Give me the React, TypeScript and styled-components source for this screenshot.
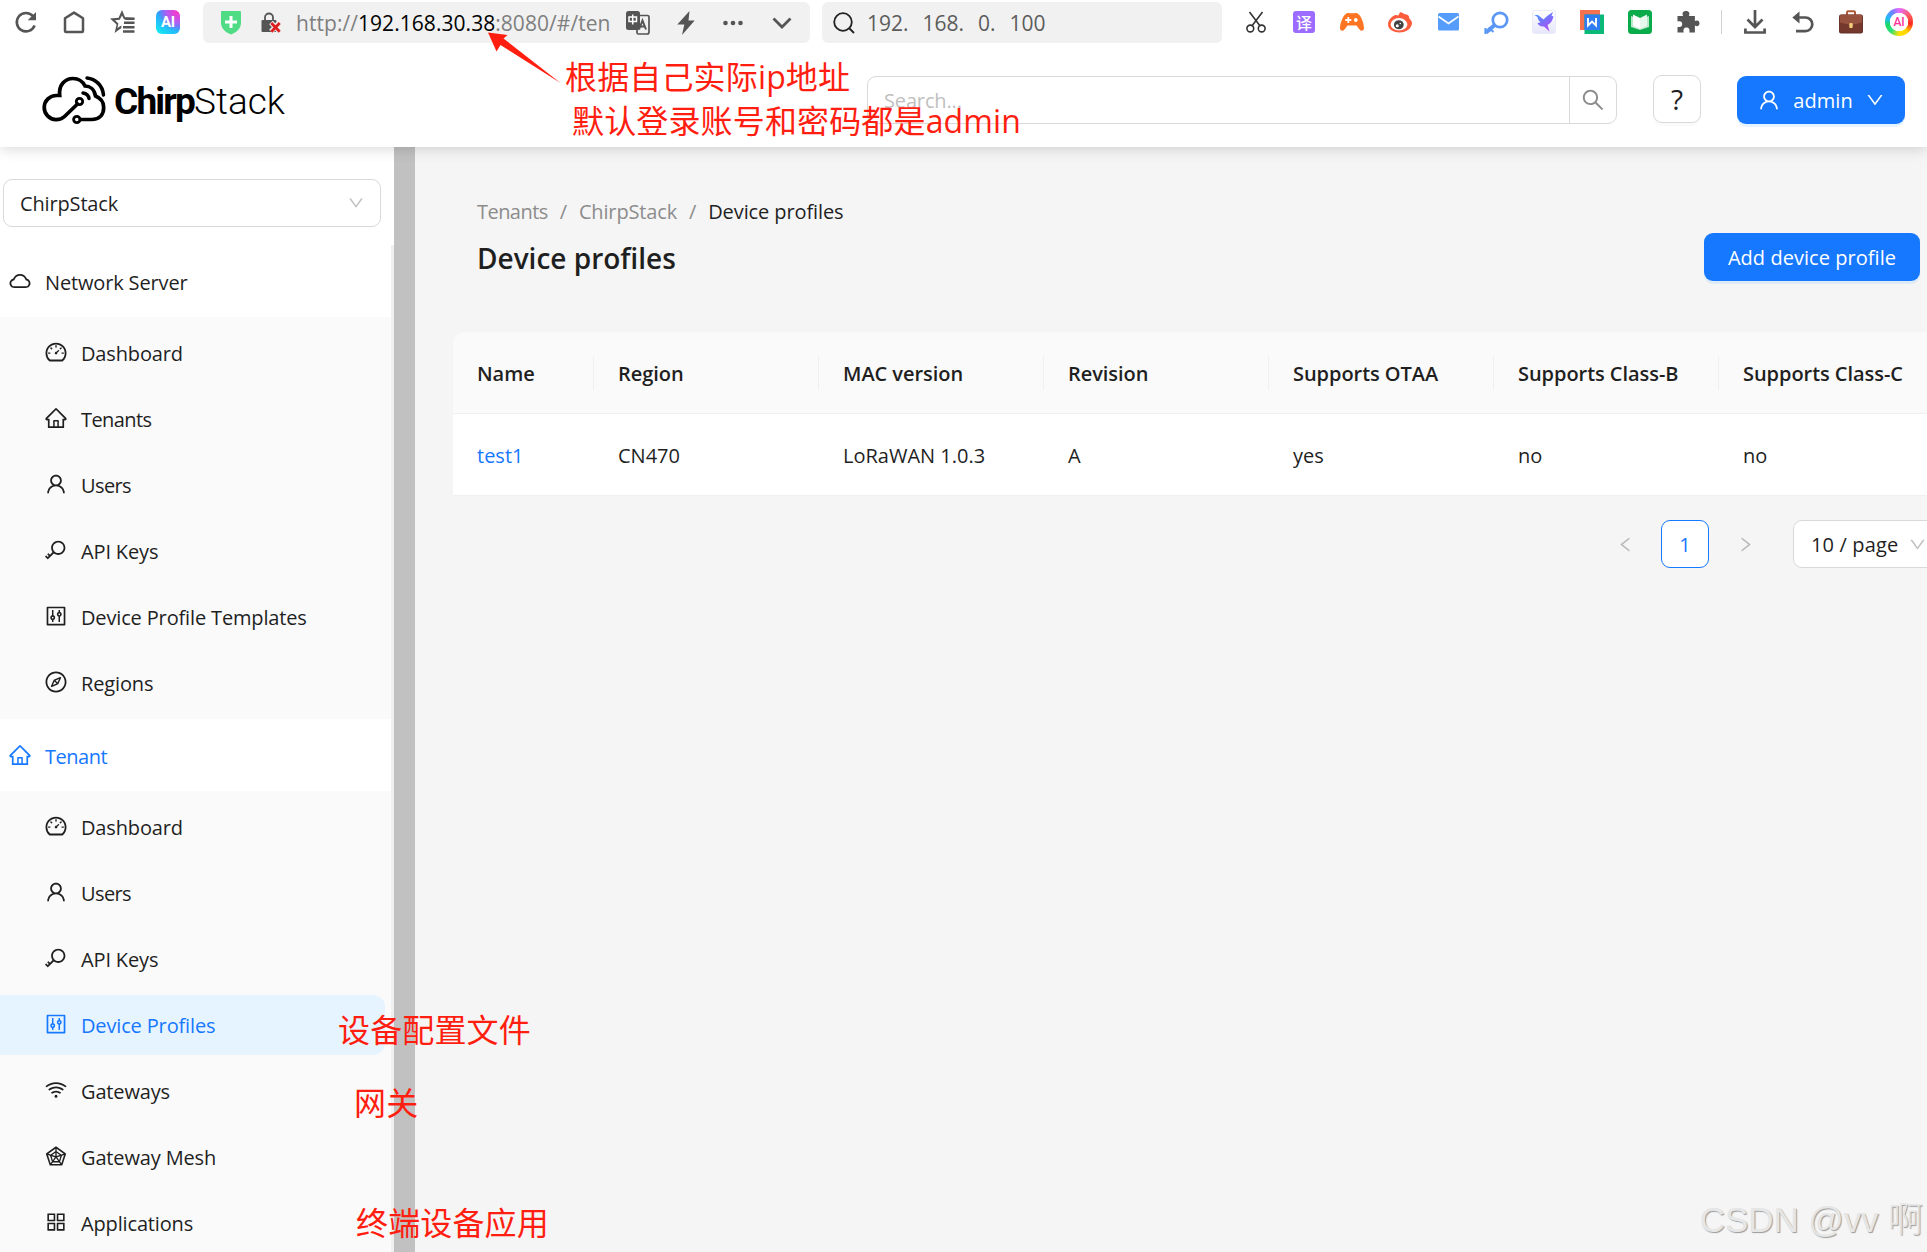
import React from "react";
import styled, { createGlobalStyle, css } from "styled-components";
import {
  AiOutlineCloud,
  AiOutlineDashboard,
  AiOutlineHome,
  AiOutlineUser,
  AiOutlineKey,
  AiOutlineControl,
  AiOutlineCompass,
  AiOutlineWifi,
  AiOutlineRadarChart,
  AiOutlineAppstore,
  AiOutlineSearch,
  AiOutlineDown,
  AiOutlineLeft,
  AiOutlineRight,
} from "react-icons/ai";

const GlobalStyle = createGlobalStyle`
  * { box-sizing: border-box; }
  body {
    margin: 0;
    background: #f5f5f5;
    color: #1f1f1f;
    font-family: "Open Sans", "Noto Sans", "Noto Sans CJK SC", sans-serif;
    font-size: 20px;
    letter-spacing: -0.15px;
    overflow: hidden;
  }
  svg { display: block; flex: none; }
`;

const Page = styled.div`
  position: relative;
  width: 1927px;
  height: 1252px;
  display: flex;
  flex-direction: column;
  overflow: hidden;
`;

/* ---------- browser toolbar ---------- */

const BrowserBar = styled.div`
  position: relative;
  z-index: 3;
  display: flex;
  align-items: flex-start;
  height: 45px;
  background: #fff;
  flex: none;
`;

const Slots = styled.div<{ $width: number; $pad?: number; $shift?: number }>`
  display: flex;
  align-items: center;
  width: ${(p) => p.$width}px;
  height: 44px;
  margin-left: ${(p) => p.$shift ?? 0}px;
  padding-left: ${(p) => p.$pad ?? 0}px;
`;

const Slot = styled.div<{ $w?: number }>`
  width: ${(p) => p.$w ?? 48}px;
  height: 44px;
  flex: none;
  display: flex;
  align-items: center;
  justify-content: center;
`;

const Field = styled.div<{ $width: number }>`
  display: flex;
  align-items: center;
  width: ${(p) => p.$width}px;
  height: 41px;
  margin: 2px 12px 0 0;
  border-radius: 6px;
  background: #f1f1f1;
  flex: none;
`;

const Url = styled.div`
  width: 331px;
  padding-left: 14px;
  color: #7f7f7f;
  white-space: nowrap;
  font-size: 21px;
  letter-spacing: 0.05px;
  flex: none;
  b { color: #000; font-weight: 400; }
`;

const Query = styled.div`
  color: #5c5c5c;
  white-space: pre;
  font-size: 21px;
  letter-spacing: 0;
  word-spacing: 8.5px;
  margin-left: 2px;
`;

const BarDivider = styled.div`
  width: 1px;
  height: 24px;
  margin: 0 9px;
  background: #d0d0d0;
`;

const AiBadge = styled.div`
  width: 24px;
  height: 24px;
  border-radius: 6px;
  display: flex;
  align-items: center;
  justify-content: center;
  color: #fff;
  font: 700 15px/1 Roboto, sans-serif;
  background: radial-gradient(circle at 90% 5%, #ff35c8 0%, #b45cf0 35%, transparent 62%),
    linear-gradient(35deg, #16e4f2 10%, #2f9bff 60%, #5b6cff 100%);
`;

const TranslateTile = styled.div`
  width: 22px;
  height: 22px;
  border-radius: 3px;
  background: #9b6cff;
  color: #fff;
  display: flex;
  align-items: center;
  justify-content: center;
  font: 500 16px/1 "Noto Sans CJK SC", sans-serif;
`;

const AiRing = styled.div`
  width: 28px;
  height: 28px;
  border-radius: 50%;
  display: flex;
  align-items: center;
  justify-content: center;
  background: radial-gradient(circle, #fff 0 9px, transparent 9.5px),
    conic-gradient(#e46bff, #ff5a5a 60deg, #ff2a1a 100deg, #ffd400 140deg, #ffe100 180deg, #2fe07a 220deg, #18d860 255deg, #22b8ff 290deg, #7a7dff 330deg, #e46bff);
  color: #ff2f9a;
  font: 500 12px/1 Roboto, sans-serif;
`;

const G = "#555";

const Reload = () => (
  <svg width="24" height="24" viewBox="0 0 24 24" fill="none" stroke={G} strokeWidth="2.6">
    <path d="M20.6 15.5A9.2 9.2 0 1 1 19 6.2" />
    <path d="M22 2v8.3h-8.3z" fill={G} stroke="none" />
  </svg>
);
const HomeTab = () => (
  <svg width="24" height="24" viewBox="0 0 24 24" fill="none" stroke={G} strokeWidth="2.5" strokeLinejoin="round">
    <path d="M3 8.2 12 2.6l9 5.6V21a1 1 0 0 1-1 1H4a1 1 0 0 1-1-1z" />
  </svg>
);
const Favorites = () => (
  <svg width="25" height="24" viewBox="0 0 25 24" fill={G}>
    <path fillRule="evenodd" d="M12 0l3 7.3 9.5.6v1H15.500L14 9.600 12 5.600 9.800 9.800 5 10.300l3.400 3.200L7.400 18l4-2.400V18l-6.800 5 2-8.600L0 8.500l8.600-.8z" />
    <path d="M14 11.500h10.500v2.500H14zM13 16h11.500v2.500H13zM13 20.300h11.500v2.500H13z" />
    <path d="M16 7.500h8.500v2.400H15z" />
  </svg>
);
const Shield = () => (
  <svg width="22" height="25" viewBox="0 0 22 25">
    <path d="M2 1h18a1 1 0 0 1 1 1v10.500c0 6-4 9.500-10 12-6-2.500-10-6-10-12V2a1 1 0 0 1 1-1z" fill="#4fdc84" />
    <path d="M9.500 6h3v4.500H17v3h-4.500V18h-3v-4.500H5v-3h4.500z" fill="#fff" />
  </svg>
);
const InsecureLock = () => (
  <svg width="20" height="22" viewBox="0 0 20 22">
    <path d="M4 9V5.500a4 4 0 0 1 8 0V9" fill="none" stroke={G} strokeWidth="1.800" />
    <rect x="0.500" y="8" width="15" height="12" rx="1" fill={G} />
    <path d="M10 10.500l8.500 9M18.500 10.500l-8.500 9" stroke="#f1f1f1" strokeWidth="5" />
    <path d="M10.300 11l8.400 8.800M18.700 11l-8.400 8.800" stroke="#dc1f1f" strokeWidth="2.800" />
  </svg>
);
const TranslateCard = () => (
  <svg width="24" height="24" viewBox="0 0 24 24">
    <rect x="0" y="0" width="14" height="19" rx="2.500" fill={G} />
    <path d="M3 6h7.500v4.500H3zM6.700 3.500v10" fill="none" stroke="#fff" strokeWidth="1.500" />
    <path d="M14 4.500h7.500a1.500 1.500 0 0 1 1.500 1.500v15a2 2 0 0 1-2 2h-8.500a1.500 1.500 0 0 1-1.500-1.500V19" fill="none" stroke={G} strokeWidth="1.700" />
    <path d="M13 18.500l3.500-9 3.500 9M14.200 15.500h4.600" fill="none" stroke={G} strokeWidth="2" />
  </svg>
);
const Bolt = () => (
  <svg width="18" height="24" viewBox="0 0 18 24" fill={G}>
    <path d="M12.500 0 .3 13.500h7L5 24 17.700 9.500h-6.200z" />
  </svg>
);
const Dots = () => (
  <svg width="20" height="6" viewBox="0 0 20 6" fill={G}>
    <circle cx="2.500" cy="3" r="2.300" /><circle cx="10" cy="3" r="2.300" /><circle cx="17.500" cy="3" r="2.300" />
  </svg>
);
const BarChevron = () => (
  <svg width="20" height="12" viewBox="0 0 20 12" fill="none" stroke={G} strokeWidth="2.800">
    <path d="M1.500 1.500 10 10l8.500-8.500" />
  </svg>
);
const Magnifier = () => (
  <svg width="22" height="22" viewBox="0 0 22 22" fill="none" stroke="#222" strokeWidth="1.800">
    <circle cx="10" cy="10" r="8.800" /><path d="M16 16l5 5" />
  </svg>
);
const Scissors = () => (
  <svg width="20" height="22" viewBox="0 0 20 22" fill="none" stroke="#333" strokeWidth="1.600">
    <circle cx="4.300" cy="17.500" r="3.400" /><circle cx="15.700" cy="17.500" r="3.400" />
    <path d="M3.500 1l10.400 13.700M16.500 1 6.100 14.700" />
  </svg>
);
const Gamepad = () => (
  <svg width="24" height="20" viewBox="0 0 24 20">
    <path d="M5.500 2.200C8 .2 9 1.300 12 1.300s4-1.100 6.500.9C21.500 4.500 24 12 24 16c0 3-3 3.600-4.500 1.500L16.500 13.500h-9L4.500 17.500C3 19.600 0 19 0 16 0 12 2.500 4.500 5.500 2.200z" fill="#fd7422" />
    <path d="M8.300 5v6M5.300 8h6" stroke="#fff" strokeWidth="1.800" />
    <circle cx="15.800" cy="8" r="1.900" fill="#fff" />
  </svg>
);
const Weibo = () => (
  <svg width="24" height="21" viewBox="0 0 24 21">
    <path d="M10 3.500C12 2 11 0 13 .3c2 .3 2 1.700 4 2 2.500.2 4.300 1 4.200 3.500 0 1.500 2.800 2.600 2.800 5.200 0 5-5.500 9.500-12.500 9.500S0 17 0 12.300C0 8.500 4 3.500 7.500 3c1.200-.2 1.700.2 2.500.5z" fill="#fb5d3c" />
    <ellipse cx="11" cy="12.300" rx="8.300" ry="6.200" fill="#fff" />
    <ellipse cx="10.800" cy="12.800" rx="4.900" ry="4.500" fill="#444" />
    <circle cx="9.300" cy="13.800" r="1.500" fill="#fff" /><circle cx="12.300" cy="11.500" r=".8" fill="#fff" />
  </svg>
);
const Mail = () => (
  <svg width="21" height="18" viewBox="0 0 21 18">
    <rect width="21" height="17.500" rx="1.500" fill="#559cfb" />
    <path d="M.5 3.500 10.500 10.500 20.500 3.500" fill="none" stroke="#fff" strokeWidth="1.700" />
  </svg>
);
const BlueKey = () => (
  <svg width="25" height="23" viewBox="0 0 25 23" fill="none" stroke="#5a97f6">
    <circle cx="16" cy="9" r="7.200" strokeWidth="2.700" />
    <path d="M10.700 14 2 21.500" strokeWidth="4" /><path d="M5.300 16.500v4.500M1.500 17v6" strokeWidth="2.200" />
    <path d="M7 18.500l2.500 2.500" strokeWidth="2" />
  </svg>
);
const Bird = () => (
  <svg width="24" height="24" viewBox="0 0 24 24">
    <defs>
      <linearGradient id="birdFill" x1="0" y1="0" x2="0.600" y2="1">
        <stop offset="0.200" stopColor="#4c8dff" /><stop offset="1" stopColor="#b04df5" />
      </linearGradient>
      <linearGradient id="birdTile" x1="0" y1="0" x2="0" y2="1">
        <stop offset="0" stopColor="#fff" /><stop offset="1" stopColor="#e6e6fb" />
      </linearGradient>
    </defs>
    <rect x=".5" y=".5" width="23" height="23" rx="2" fill="url(#birdTile)" stroke="#e9ebf8" />
    <path d="M2 5.500c2.500-1 4.500-.8 6 1.200l3.500 2.800C14 6.500 17.500 4.500 21 2l-1.500 4 2 .3c-.8 3.800-2.500 7-6 8.700L17.500 21.500 12 16.500C8.500 17 6.500 15.500 5.500 13l3-.5C6.500 10.500 6 9 5.500 7 4.500 6 3.500 5.800 2 5.500z" fill="url(#birdFill)" />
  </svg>
);
const WordCards = () => (
  <svg width="24" height="24" viewBox="0 0 24 24">
    <rect width="20" height="20" fill="#f4724f" /><rect x="4.500" y="4.500" width="19.500" height="19.500" fill="#0cb877" />
    <rect x="4.500" y="4.500" width="15.500" height="15.500" fill="#2f7df3" />
    <path d="M8 8v7.500l4-4 4 4V8" fill="none" stroke="#fff" strokeWidth="1.900" />
  </svg>
);
const Book = () => (
  <svg width="24" height="24" viewBox="0 0 24 24">
    <rect width="24" height="24" rx="3.500" fill="#09ab4b" />
    <path d="M3 6l9 3 9-3v11l-9 3-9-3z" fill="#b9e8cc" />
    <path d="M5 4.500 12 8v11L5 16z" fill="#fff" /><path d="M12 8l7-3.500V16l-7 3z" fill="#e6f7ed" />
  </svg>
);
const Puzzle = () => (
  <svg width="24" height="22" viewBox="0 0 24 22" fill={G}>
    <path d="M1.500 5h5.600C5.500 1.500 7.500 0 10 0s4.500 1.500 2.900 5h6v5c3-1.300 4.600 0 4.600 2.300s-1.600 3.700-4.600 2.300V21.500h-5.600c.8-3.500-.5-5-2.800-5s-3.600 1.500-2.800 5H1.500v-5.600c3.500.7 4.700-.8 4.700-2.900S5 9.500 1.500 10.500z" />
  </svg>
);
const Download = () => (
  <svg width="22" height="24" viewBox="0 0 22 24" fill="none" stroke={G} strokeWidth="2.700">
    <path d="M11 0v16.500M3.500 9.500l7.500 7.500 7.500-7.500" /><path d="M1.400 18.500v4h19.200v-4" />
  </svg>
);
const Undo = () => (
  <svg width="22" height="22" viewBox="0 0 22 22" fill="none" stroke={G} strokeWidth="2.700">
    <path d="M4 6.500h9.500a6.800 6.800 0 0 1 0 13.600H4" /><path d="M7.500.5v12L.3 6.500z" fill={G} stroke="none" />
  </svg>
);
const Briefcase = () => (
  <svg width="24" height="24" viewBox="0 0 24 24">
    <path d="M8 5V2.200a1 1 0 0 1 1-1h6a1 1 0 0 1 1 1V5" fill="none" stroke="#b05a3a" strokeWidth="2" />
    <rect x="0" y="4.500" width="24" height="19" rx="2" fill="#69352a" />
    <path d="M1 6a1.500 1.500 0 0 1 1.500-1.500h19A1.500 1.500 0 0 1 23 6v7l-10 2.500h-2L1 13z" fill="#96513f" />
    <path d="M1 12.500l10 2.500h2l10-2.500V22H1z" fill="#74392c" />
    <rect x="10.300" y="13" width="3.400" height="5" rx="1" fill="#f6cf7a" />
  </svg>
);

/* ---------- application header ---------- */

const Header = styled.header`
  position: relative;
  z-index: 2;
  display: flex;
  align-items: flex-start;
  height: 102px;
  padding: 31px 22px 0 42px;
  background: #fff;
  box-shadow: 0 0 15px rgba(0, 0, 0, 0.2);
  flex: none;
`;

const Logo = styled.div`
  display: flex;
  width: 825px;
  margin-top: -2px;
`;

const LogoText = styled.div`
  margin: 5px 0 0 6px;
  color: #000;
  font: 300 37px/46px Roboto, sans-serif;
  letter-spacing: 0;
  white-space: nowrap;
  b { font-weight: 700; letter-spacing: -1.8px; }
`;

const box = css`
  height: 48px;
  border: 1px solid #d9d9d9;
  border-radius: 9px;
  background: #fff;
`;

const SearchBox = styled.div`
  ${box}
  display: flex;
  align-items: center;
  width: 750px;
  padding-left: 16px;
  color: #bfbfbf;
`;

const SearchButton = styled.div`
  display: flex;
  align-items: center;
  justify-content: center;
  width: 47px;
  height: 48px;
  margin-left: auto;
  border-left: 1px solid #d9d9d9;
  color: #8c8c8c;
`;

const HelpButton = styled.div`
  ${box}
  display: flex;
  align-items: center;
  justify-content: center;
  width: 48px;
  margin: -1px 36px 0;
  box-shadow: 0 3px 0 rgba(0, 0, 0, 0.02);
  font: 400 28px/1 "Open Sans", sans-serif;
`;

const PrimaryButton = styled.div<{ $width: number }>`
  display: flex;
  align-items: center;
  justify-content: center;
  gap: 12px;
  width: ${(p) => p.$width}px;
  height: 48px;
  border-radius: 9px;
  background: #1677ff;
  box-shadow: 0 3px 0 rgba(5, 145, 255, 0.1);
  color: #fff;
  letter-spacing: 0.05px;
  white-space: nowrap;
`;

/* ---------- side menu ---------- */

const Body = styled.div`
  display: flex;
  flex: 1;
  min-height: 0;
`;

const Sider = styled.aside`
  width: 394px;
  height: 1105px;
  background: #fff;
  overflow: hidden;
  flex: none;
`;

const TenantSelect = styled.div`
  ${box}
  display: flex;
  align-items: center;
  justify-content: space-between;
  width: 378px;
  margin: 32px 0 18px 3px;
  padding: 0 15px 0 16px;
  svg { color: #bfbfbf; }
`;

const Menu = styled.nav`
  width: 394px;
  border-right: 3px solid #f0f0f0;
`;

const MenuTitle = styled.div<{ $active?: boolean; $tight?: boolean }>`
  display: flex;
  align-items: center;
  gap: 13px;
  height: 72px;
  padding: 2px 0 0 8px;
  color: ${(p) => (p.$active ? "#1677ff" : "#1f1f1f")};
  letter-spacing: ${(p) => (p.$tight ? "-0.5px" : "-0.15px")};
  svg { margin-top: -3px; }
`;

const SubMenu = styled.div`
  display: flex;
  flex-direction: column;
  gap: 6px;
  padding: 6px 6px 6px 0;
  background: #fafafa;
`;

const MenuItem = styled.div<{ $active?: boolean; $tight?: boolean }>`
  display: flex;
  align-items: center;
  gap: 13px;
  height: 60px;
  padding: 1px 0 0 44px;
  border-radius: 0 12px 12px 0;
  color: ${(p) => (p.$active ? "#1677ff" : "#1f1f1f")};
  background: ${(p) => (p.$active ? "#e6f4ff" : "transparent")};
  letter-spacing: ${(p) => (p.$tight ? "-0.6px" : "-0.15px")};
  svg { margin-top: -3px; }
`;

const ScrollTrack = styled.div`
  width: 21px;
  background: #c1c1c1;
  flex: none;
`;

/* ---------- content ---------- */

const Content = styled.main`
  width: 1512px;
  flex: none;
  padding-top: 50px;
`;

const Crumbs = styled.div`
  display: flex;
  gap: 12px;
  margin-left: 62px;
  height: 30px;
  line-height: 30px;
  color: #8c8c8c;
  span:first-child { letter-spacing: -0.55px; }
  b { font-weight: 400; color: #1f1f1f; letter-spacing: -0.1px; }
`;

const TitleRow = styled.div`
  display: flex;
  align-items: center;
  justify-content: space-between;
  height: 48px;
  margin: 6px 7px 51px 62px;
`;

const Title = styled.h1`
  margin: 2px 0 0;
  font-size: 28px;
  font-weight: 600;
  letter-spacing: 0;
`;

const Table = styled.div`
  width: 1530px;
  margin-left: 38px;
  border-radius: 12px 0 0 0;
  overflow: hidden;
`;

const Row = styled.div<{ $head?: boolean }>`
  display: grid;
  grid-template-columns: 141px repeat(6, 225px);
  height: 82px;
  align-items: center;
  border-bottom: 1px solid #f0f0f0;
  background: ${(p) => (p.$head ? "#fafafa" : "#fff")};
`;

const HeadCell = styled.div`
  height: 34px;
  line-height: 36px;
  padding-left: 24px;
  border-right: 1px solid #f0f0f0;
  font-weight: 600;
  letter-spacing: -0.05px;
  white-space: nowrap;
`;

const Cell = styled.div<{ $link?: boolean }>`
  padding: 1px 0 0 24px;
  color: ${(p) => (p.$link ? "#1677ff" : "#1f1f1f")};
  letter-spacing: 0;
  white-space: nowrap;
`;

const Pagination = styled.div`
  display: flex;
  align-items: center;
  margin: 24px 0 0 1186px;
  color: #b8b8b8;
`;

const PageArrow = styled.div`
  display: flex;
  align-items: center;
  justify-content: center;
  width: 48px;
  height: 48px;
  flex: none;
`;

const PageNumber = styled.div`
  ${box}
  display: flex;
  align-items: center;
  justify-content: center;
  width: 48px;
  margin: 0 12px;
  border-color: #1677ff;
  color: #1677ff;
  flex: none;
`;

const PageSize = styled.div`
  ${box}
  display: flex;
  align-items: center;
  width: 152px;
  margin-left: 24px;
  padding-left: 17px;
  color: #1f1f1f;
  letter-spacing: 0.15px;
  white-space: nowrap;
  flex: none;
  svg { margin-left: 10px; color: #bfbfbf; }
`;

/* ---------- hand-placed notes over the page ---------- */

const Note = styled.div<{ $x: number; $y: number }>`
  position: absolute;
  z-index: 5;
  left: ${(p) => p.$x}px;
  top: ${(p) => p.$y}px;
  color: #ff1e10;
  font-size: 32px;
  line-height: 40px;
  letter-spacing: 0.15px;
  font-family: "Open Sans", "Noto Sans CJK SC", sans-serif;
  white-space: nowrap;
`;

const Arrow = styled.svg`
  position: absolute;
  z-index: 5;
  left: 486px;
  top: 31px;
`;

const Watermark = styled.div`
  position: absolute;
  z-index: 5;
  right: 4px;
  top: 1198px;
  color: #e6e6e6;
  font: 300 35px/44px "Liberation Sans", "Noto Sans CJK SC", sans-serif;
  letter-spacing: -0.1px;
  text-shadow: 1px 1px 1px #9a9a9a;
  white-space: nowrap;
`;

type Entry = {
  label: string;
  icon: React.ComponentType<{ size?: number }>;
  active?: boolean;
  tight?: boolean;
};

const networkItems: Entry[] = [
  { label: "Dashboard", icon: AiOutlineDashboard },
  { label: "Tenants", icon: AiOutlineHome, tight: true },
  { label: "Users", icon: AiOutlineUser, tight: true },
  { label: "API Keys", icon: AiOutlineKey },
  { label: "Device Profile Templates", icon: AiOutlineControl },
  { label: "Regions", icon: AiOutlineCompass },
];

const tenantItems: Entry[] = [
  { label: "Dashboard", icon: AiOutlineDashboard },
  { label: "Users", icon: AiOutlineUser, tight: true },
  { label: "API Keys", icon: AiOutlineKey },
  { label: "Device Profiles", icon: AiOutlineControl, active: true },
  { label: "Gateways", icon: AiOutlineWifi },
  { label: "Gateway Mesh", icon: AiOutlineRadarChart },
  { label: "Applications", icon: AiOutlineAppstore },
];

const columns = ["Name", "Region", "MAC version", "Revision", "Supports OTAA", "Supports Class-B", "Supports Class-C"];
const record = ["test1", "CN470", "LoRaWAN 1.0.3", "A", "yes", "no", "no"];

const extensions = [
  Scissors,
  () => <TranslateTile>译</TranslateTile>,
  Gamepad,
  Weibo,
  Mail,
  BlueKey,
  Bird,
  WordCards,
  Book,
  Puzzle,
];

const Items = ({ entries }: { entries: Entry[] }) => (
  <SubMenu>
    {entries.map(({ label, icon: Icon, active, tight }) => (
      <MenuItem key={label} $active={active} $tight={tight}>
        <Icon size={24} />
        {label}
      </MenuItem>
    ))}
  </SubMenu>
);

const CloudMark = () => (
  <svg width="66" height="52" viewBox="0 0 66 52" fill="none" stroke="#000" strokeWidth="3.700" strokeLinecap="round">
    <path d="M35.500 30 22.500 42.500C19.500 45.500 17 45.600 14 45.600A12 12 0 0 1 14.500 21.500H17.700C16.500 11 23 4.500 31 4.500c6 0 10 3.500 12 7.500 5 0 9.500 3.500 10.500 10 5 2 8.200 6 8.200 11.500C61.700 41 57 45.500 50 45.500H38.500" />
    <circle cx="37.500" cy="27.500" r="3.200" strokeWidth="2.800" />
    <circle cx="34.800" cy="45.500" r="3.200" strokeWidth="2.800" />
    <path d="M41 19c3.500.500 5.500 2.500 6 5.500M45 4C53.500 5 60.500 11 61.500 21" strokeWidth="3.500" />
  </svg>
);

export default function App() {
  return (
    <>
      <GlobalStyle />
      <Page>
        <BrowserBar>
          <Slots $width={203} $pad={2}>
            <Slot><Reload /></Slot>
            <Slot><HomeTab /></Slot>
            <Slot><Favorites /></Slot>
            <Slot $w={44}><AiBadge>AI</AiBadge></Slot>
          </Slots>
          <Field $width={607}>
            <Slot $w={56}><Shield /></Slot>
            <Slot $w={23}><InsecureLock /></Slot>
            <Url>http://<b>192.168.30.38</b>:8080/#/ten</Url>
            <Slot $w={49}><TranslateCard /></Slot>
            <Slot $w={47}><Bolt /></Slot>
            <Slot $w={48}><Dots /></Slot>
            <Slot $w={50}><BarChevron /></Slot>
          </Field>
          <Field $width={400}>
            <Slot $w={43}><Magnifier /></Slot>
            <Query>192. 168. 0. 100</Query>
          </Field>
          <Slots $width={695} $shift={-2}>
            {extensions.map((Icon, i) => (
              <Slot key={i}><Icon /></Slot>
            ))}
            <BarDivider />
            <Slot><Download /></Slot>
            <Slot><Undo /></Slot>
            <Slot><Briefcase /></Slot>
            <Slot><AiRing>AI</AiRing></Slot>
          </Slots>
        </BrowserBar>

        <Header>
          <Logo>
            <CloudMark />
            <LogoText><b>Chirp</b>Stack</LogoText>
          </Logo>
          <SearchBox>
            Search...
            <SearchButton><AiOutlineSearch size={26} /></SearchButton>
          </SearchBox>
          <HelpButton>?</HelpButton>
          <PrimaryButton $width={168}>
            <AiOutlineUser size={24} />
            admin
            <AiOutlineDown size={20} />
          </PrimaryButton>
        </Header>

        <Body>
          <Sider>
            <TenantSelect>
              ChirpStack
              <AiOutlineDown size={18} />
            </TenantSelect>
            <Menu>
              <MenuTitle><AiOutlineCloud size={24} />Network Server</MenuTitle>
              <Items entries={networkItems} />
              <MenuTitle $active $tight><AiOutlineHome size={24} />Tenant</MenuTitle>
              <Items entries={tenantItems} />
            </Menu>
          </Sider>
          <ScrollTrack />
          <Content>
            <Crumbs>
              <span>Tenants</span><span>/</span><span>ChirpStack</span><span>/</span><b>Device profiles</b>
            </Crumbs>
            <TitleRow>
              <Title>Device profiles</Title>
              <PrimaryButton $width={216}>Add device profile</PrimaryButton>
            </TitleRow>
            <Table>
              <Row $head>{columns.map((c) => <HeadCell key={c}>{c}</HeadCell>)}</Row>
              <Row>{record.map((v, i) => <Cell key={i} $link={i === 0}>{v}</Cell>)}</Row>
            </Table>
            <Pagination>
              <PageArrow><AiOutlineLeft size={19} /></PageArrow>
              <PageNumber>1</PageNumber>
              <PageArrow><AiOutlineRight size={19} /></PageArrow>
              <PageSize>10 / page<AiOutlineDown size={19} /></PageSize>
            </Pagination>
          </Content>
        </Body>

        <Arrow width="76" height="54" viewBox="0 0 76 54">
          <path d="M2 1.500 21.500 4 17.500 7.500 74.500 52 14.500 14 10.500 20.500z" fill="#ff1e10" />
        </Arrow>
        <Note $x={565} $y={57}>根据自己实际ip地址</Note>
        <Note $x={572} $y={101}>默认登录账号和密码都是admin</Note>
        <Note $x={338} $y={1010}>设备配置文件</Note>
        <Note $x={354} $y={1083}>网关</Note>
        <Note $x={356} $y={1203}>终端设备应用</Note>
        <Watermark>CSDN @vv 啊</Watermark>
      </Page>
    </>
  );
}
